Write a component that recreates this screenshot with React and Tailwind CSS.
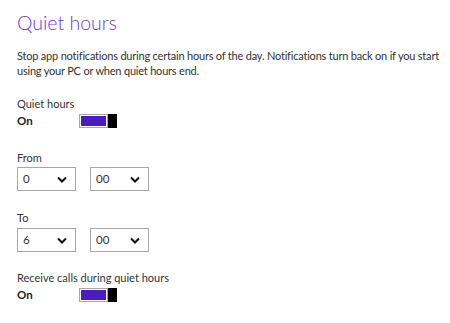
import React from 'react';

const font = { fontFamily: 'Lato, "Open Sans", sans-serif' };

const Toggle = () => (
    <div className="flex h-[14px] w-[38px]">
        <div className="flex-1 border border-[#a8a8a8] p-[1px]">
            <div className="h-full w-full bg-[#4a1bbd]" />
        </div>
        <div className="h-full w-[9px] bg-black" />
    </div>
);

const Chevron = () => (
    <svg width="10" height="7" viewBox="0 0 10 7" fill="none">
        <path d="M1 1.5 L5 5.5 L9 1.5" stroke="#111" strokeWidth="2" />
    </svg>
);

const Select = ({ value }) => (
    <div className="flex h-[24px] w-[59px] items-center justify-between border border-[#a8a8a8] bg-white pl-[5px] pr-[8px] text-[11.5px] text-[#333]">
        <span>{value}</span>
        <Chevron />
    </div>
);

const App = () => {
    return (
        <div className="h-[323px] w-[450px] bg-white pl-[17px] pr-[6px] text-[#333]" style={font}>
            <h1 className="pt-[9px] text-[19.5px] font-light leading-[28px] text-[#6a40d2]">Quiet hours</h1>
            <p className="mt-[11px] text-[11px] leading-[15px] tracking-[-0.2px]">
                Stop app notifications during certain hours of the day. Notifications turn back on if you start using your PC or when quiet hours end.
            </p>

            <div className="mt-[18px] text-[11px] leading-[15px]">Quiet hours</div>
            <div className="mt-[2px] flex items-center">
                <span className="w-[62px] text-[11.5px] font-bold leading-[15px] text-[#222]">On</span>
                <Toggle />
            </div>

            <div className="mt-[22px] text-[11px] leading-[15px]">From</div>
            <div className="mt-[2px] flex gap-[14px]">
                <Select value="0" />
                <Select value="00" />
            </div>

            <div className="mt-[19px] text-[11px] leading-[15px]">To</div>
            <div className="mt-[3px] flex gap-[14px]">
                <Select value="6" />
                <Select value="00" />
            </div>

            <div className="mt-[18px] text-[11px] leading-[15px]">Receive calls during quiet hours</div>
            <div className="mt-[2px] flex items-center">
                <span className="w-[62px] text-[11.5px] font-bold leading-[15px] text-[#222]">On</span>
                <Toggle />
            </div>
        </div>
    );
};

export default App;
